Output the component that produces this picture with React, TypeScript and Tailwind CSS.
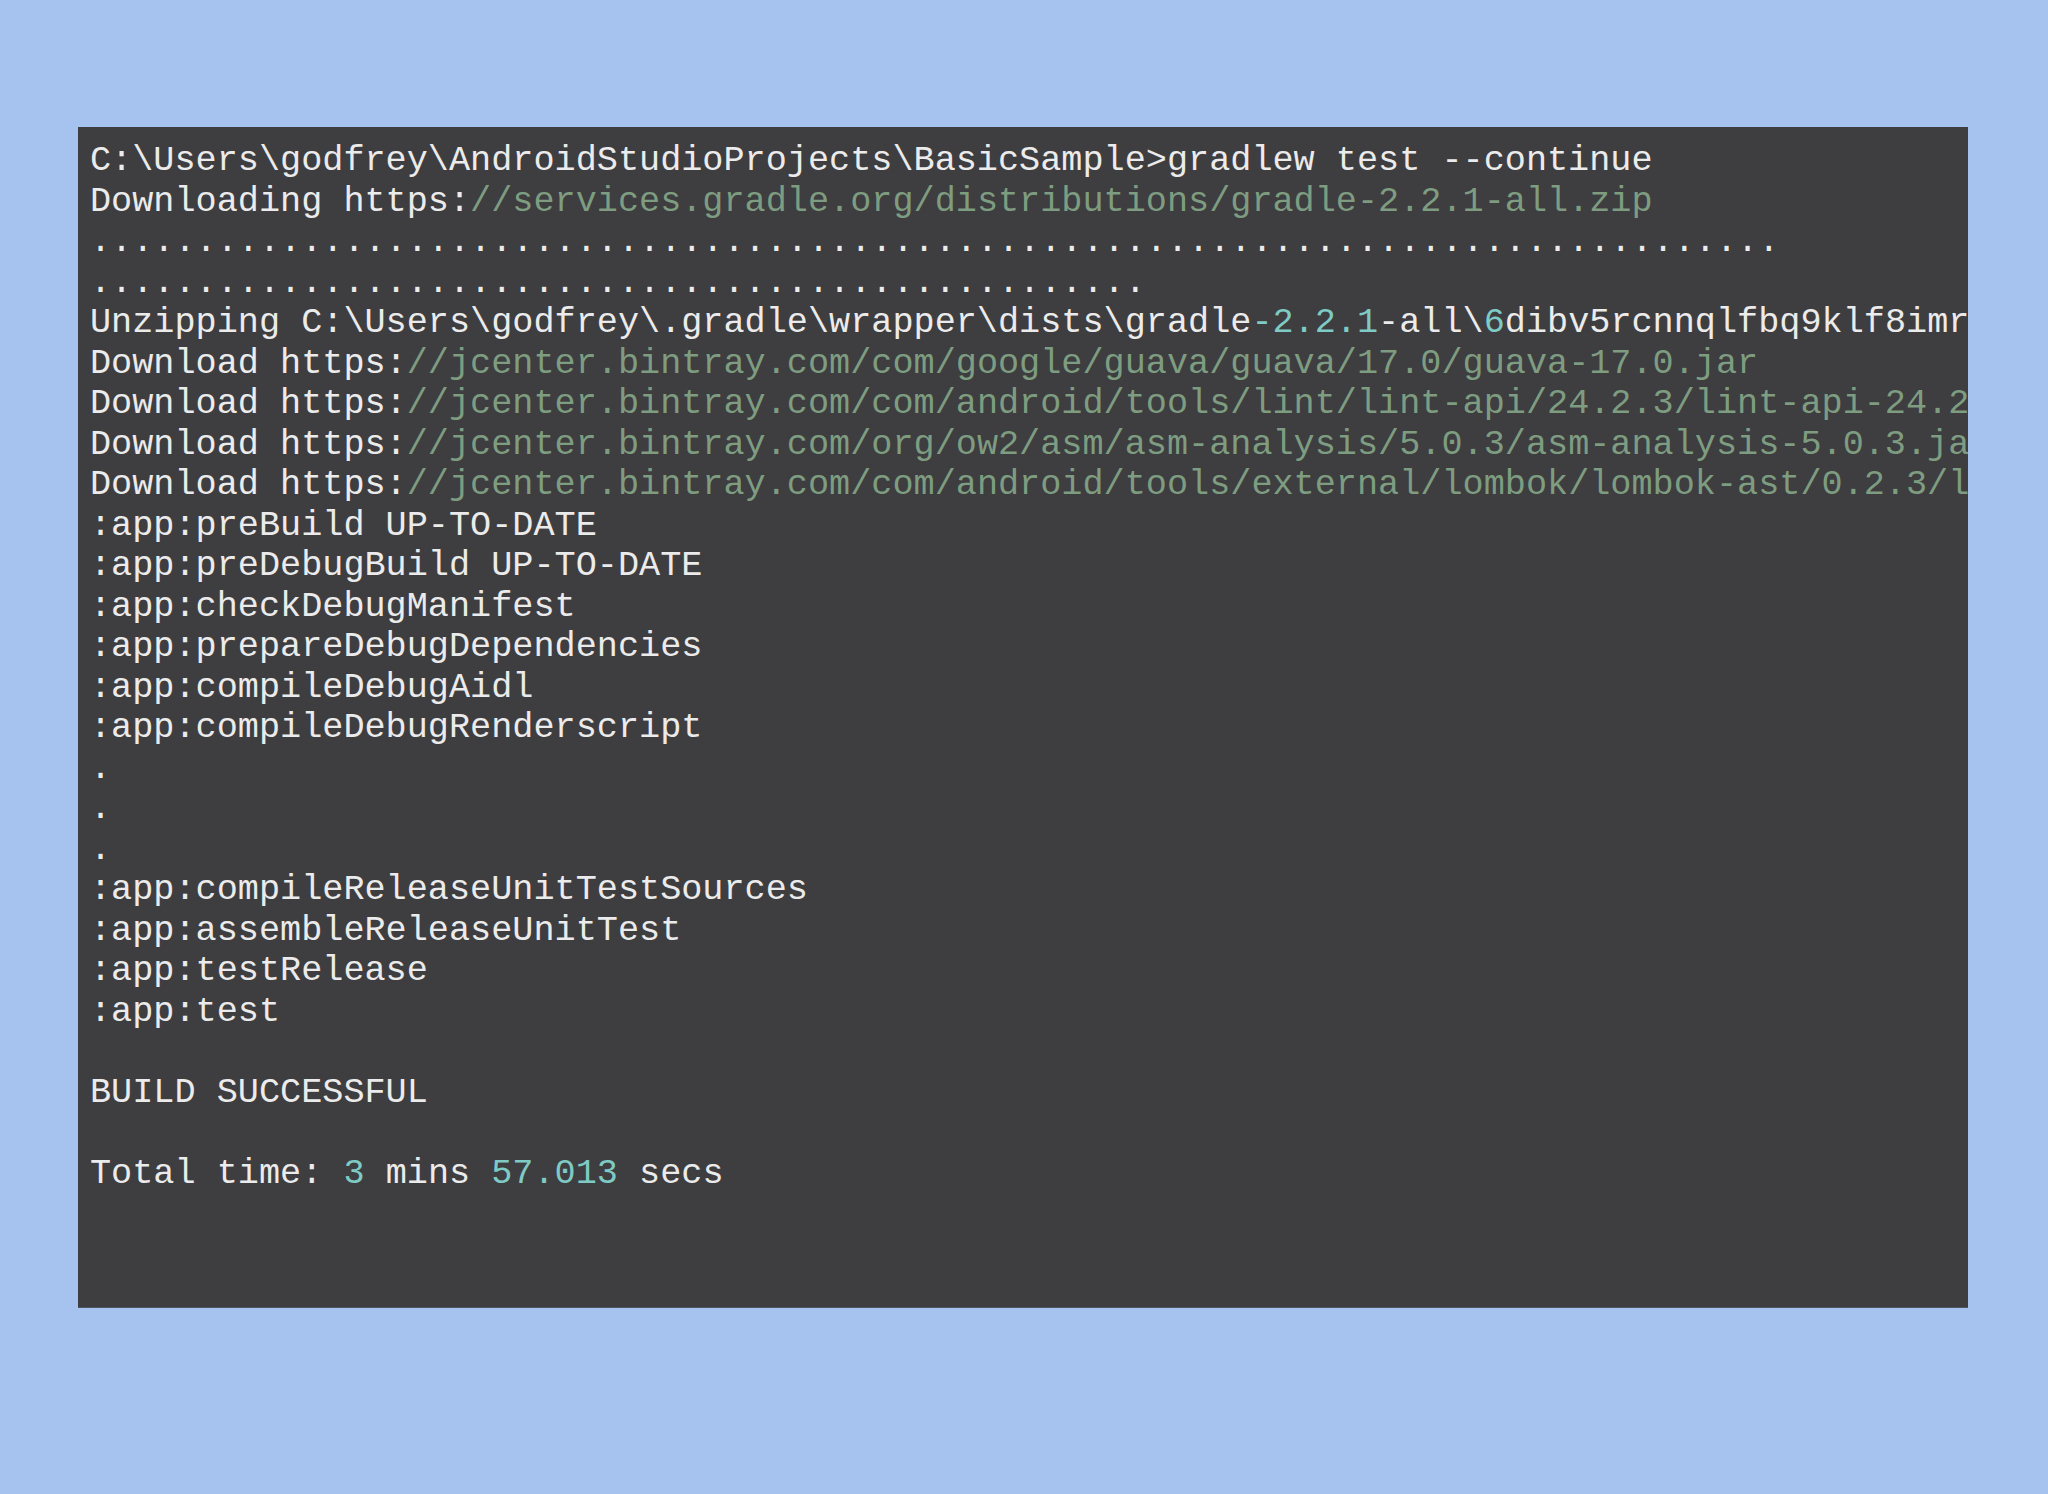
type Seg = { t: string; c?: "g" | "n" };

// terminal output, each row split into coloured runs
const lines: Seg[][] = [
  [{ t: "C:\\Users\\godfrey\\AndroidStudioProjects\\BasicSample>gradlew test --continue" }],
  [{ t: "Downloading https:" }, { t: "//services.gradle.org/distributions/gradle-2.2.1-all.zip", c: "g" }],
  [{ t: ".".repeat(80) }],
  [{ t: ".".repeat(50) }],
  [
    { t: "Unzipping C:\\Users\\godfrey\\.gradle\\wrapper\\dists\\gradle" },
    { t: "-2.2.1", c: "n" },
    { t: "-all\\" },
    { t: "6", c: "n" },
    { t: "dibv5rcnnqlfbq9klf8imr" },
  ],
  [{ t: "Download https:" }, { t: "//jcenter.bintray.com/com/google/guava/guava/17.0/guava-17.0.jar", c: "g" }],
  [{ t: "Download https:" }, { t: "//jcenter.bintray.com/com/android/tools/lint/lint-api/24.2.3/lint-api-24.2", c: "g" }],
  [{ t: "Download https:" }, { t: "//jcenter.bintray.com/org/ow2/asm/asm-analysis/5.0.3/asm-analysis-5.0.3.ja", c: "g" }],
  [{ t: "Download https:" }, { t: "//jcenter.bintray.com/com/android/tools/external/lombok/lombok-ast/0.2.3/l", c: "g" }],
  [{ t: ":app:preBuild UP-TO-DATE" }],
  [{ t: ":app:preDebugBuild UP-TO-DATE" }],
  [{ t: ":app:checkDebugManifest" }],
  [{ t: ":app:prepareDebugDependencies" }],
  [{ t: ":app:compileDebugAidl" }],
  [{ t: ":app:compileDebugRenderscript" }],
  [{ t: "." }],
  [{ t: "." }],
  [{ t: "." }],
  [{ t: ":app:compileReleaseUnitTestSources" }],
  [{ t: ":app:assembleReleaseUnitTest" }],
  [{ t: ":app:testRelease" }],
  [{ t: ":app:test" }],
  [{ t: "" }],
  [{ t: "BUILD SUCCESSFUL" }],
  [{ t: "" }],
  [
    { t: "Total time: " },
    { t: "3", c: "n" },
    { t: " mins " },
    { t: "57.013", c: "n" },
    { t: " secs" },
  ],
];

export default function App() {
  return (
    <div className="min-h-screen w-full bg-[#a6c3f0] pt-[127px] pl-[78px]">
      {/* Terminal */}
      <div className="w-[1890px] h-[1181px] bg-[#3e3d40] overflow-hidden pt-[14px] pl-[12px] border-b border-[#4d5560]">
        <div className="font-['Liberation_Mono','Courier_New',monospace] text-[35.2px] leading-[40.5px] text-[#ebebeb]">
          {lines.map((line, i) => (
            <div key={i} className="whitespace-pre h-[40.5px]">
              {line.map((s, j) => (
                <span
                  key={j}
                  className={
                    s.c === "g"
                      ? "text-[#7d9c80]"
                      : s.c === "n"
                      ? "text-[#7ecac4]"
                      : undefined
                  }
                >
                  {s.t}
                </span>
              ))}
            </div>
          ))}
        </div>
      </div>
    </div>
  );
}
